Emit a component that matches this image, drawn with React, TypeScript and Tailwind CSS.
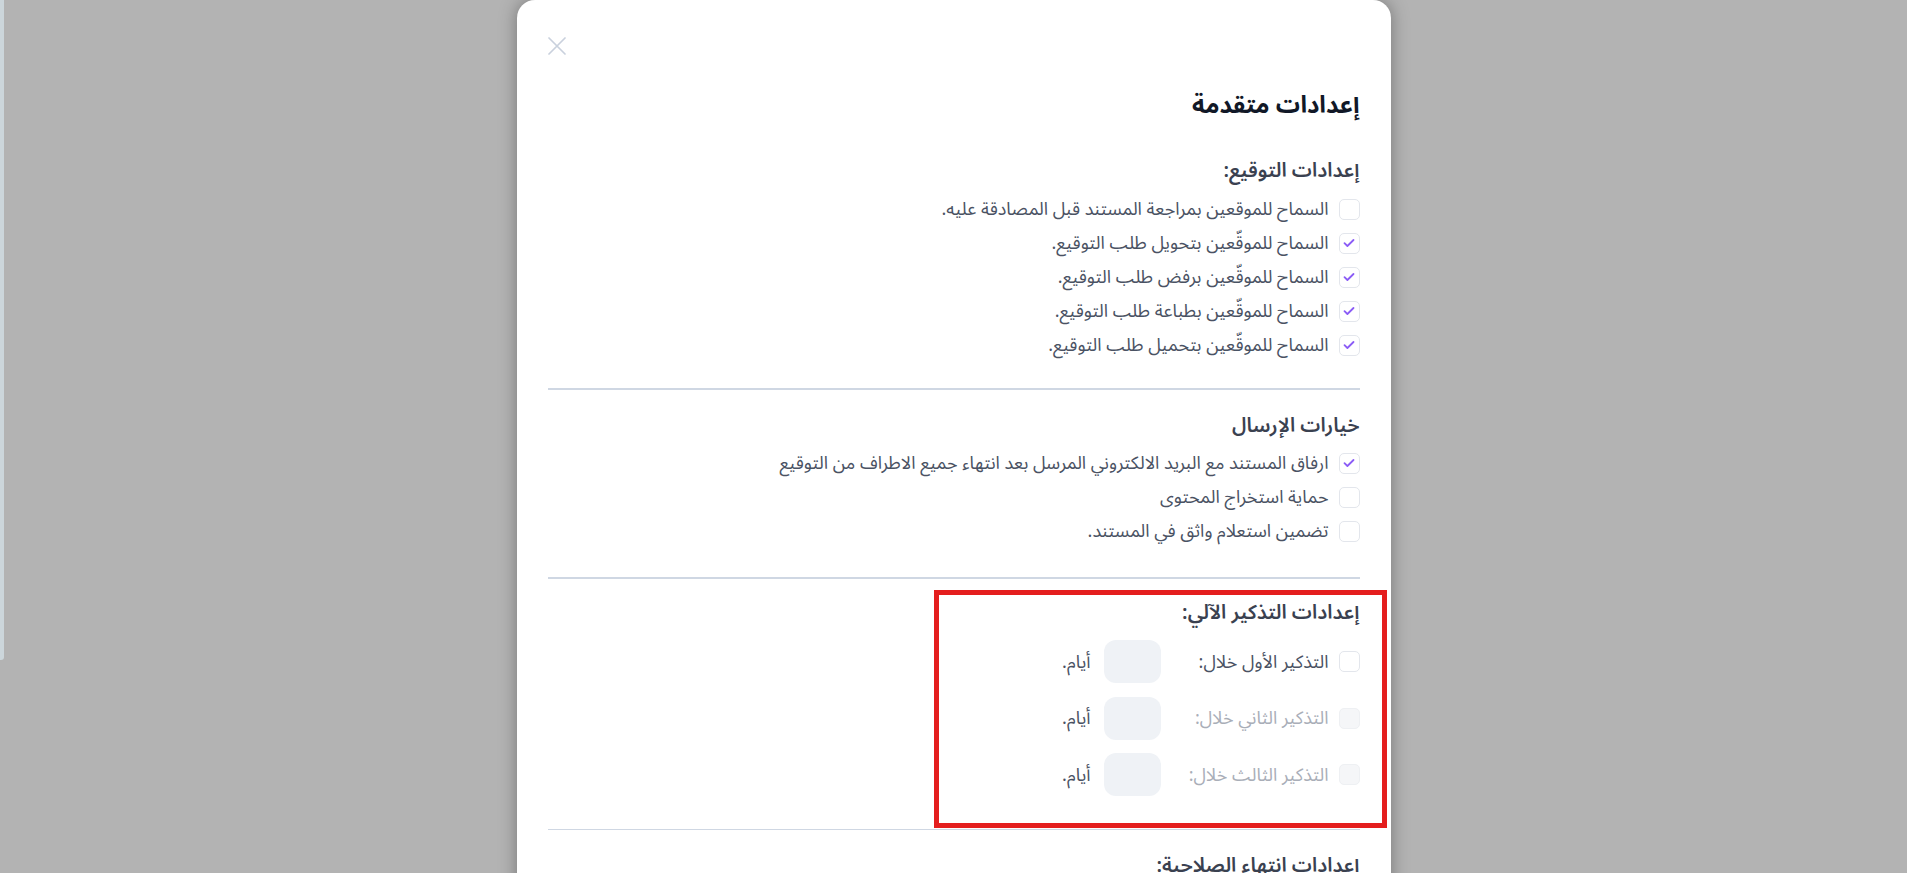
type Opt = { label: string; checked?: boolean };

const signing: Opt[] = [
  { label: "السماح للموقعين بمراجعة المستند قبل المصادقة عليه." },
  { label: "السماح للموقّعين بتحويل طلب التوقيع.", checked: true },
  { label: "السماح للموقّعين برفض طلب التوقيع.", checked: true },
  { label: "السماح للموقّعين بطباعة طلب التوقيع.", checked: true },
  { label: "السماح للموقّعين بتحميل طلب التوقيع.", checked: true },
];

const sending: Opt[] = [
  {
    label: "ارفاق المستند مع البريد الالكتروني المرسل بعد انتهاء جميع الاطراف من التوقيع",
    checked: true,
  },
  { label: "حماية استخراج المحتوى" },
  { label: "تضمين استعلام واثق في المستند." },
];

const reminders = [
  { label: "التذكير الأول خلال:", disabled: false },
  { label: "التذكير الثاني خلال:", disabled: true },
  { label: "التذكير الثالث خلال:", disabled: true },
];

function Checkbox({ checked, disabled }: { checked?: boolean; disabled?: boolean }) {
  return (
    <span
      className={
        disabled
          ? "flex h-[21px] w-[21px] shrink-0 items-center justify-center rounded-[5px] border border-[#eef0f3] bg-[#f5f6f8]"
          : "flex h-[21px] w-[21px] shrink-0 items-center justify-center rounded-[5px] border border-[#e3e6ec] bg-white"
      }
    >
      {checked && (
        <svg width="12" height="10" viewBox="0 0 12 10" fill="none">
          <path
            d="M1.5 5.2 4.4 8 10.5 2"
            stroke="#8b5cf6"
            strokeWidth="1.8"
            strokeLinecap="round"
            strokeLinejoin="round"
          />
        </svg>
      )}
    </span>
  );
}

function OptionRow({ label, checked }: Opt) {
  return (
    <label className="flex h-[34px] items-center gap-[10px]">
      <Checkbox checked={checked} />
      <span className="text-[18px] leading-[24px] text-[#4a5263]">{label}</span>
    </label>
  );
}

function Heading({ children }: { children: React.ReactNode }) {
  return (
    <h3 className="h-[28px] text-[20px] font-semibold leading-[28px] text-[#3a4150]">
      {children}
    </h3>
  );
}

export default function App() {
  return (
    <div
      className="relative h-[873px] w-full overflow-hidden bg-[#b3b3b3]"
      style={{ fontFamily: '"Noto Sans Arabic", "DejaVu Sans", "Noto Sans", sans-serif' }}
    >
      <div className="absolute left-0 top-0 h-[660px] w-[4px] rounded-br-[3px] bg-[#ccd6db]" />

      <div
        dir="rtl"
        className="relative mx-auto min-h-[1000px] w-[874px] rounded-t-[18px] bg-white px-[31px] pt-[37px] shadow-[0_0_18px_rgba(0,0,0,0.35)]"
      >
        <div className="flex justify-end">
          <svg width="18" height="18" viewBox="0 0 18 18" fill="none">
            <path
              d="M1 1 17 17M17 1 1 17"
              stroke="#c9d1dd"
              strokeWidth="1.7"
              strokeLinecap="round"
            />
          </svg>
        </div>

        <h2 className="mt-[35px] h-[32px] text-[24px] font-bold leading-[32px] text-[#111827]">
          إعدادات متقدمة
        </h2>

        <div className="mt-[35px]">
          <Heading>إعدادات التوقيع:</Heading>
          <div className="mt-[7px] flex flex-col">
            {signing.map((o) => (
              <OptionRow key={o.label} {...o} />
            ))}
          </div>
        </div>

        <div className="mt-[26px] h-[2px] bg-[#cfd7e3]" />

        <div className="mt-[22px]">
          <Heading>خيارات الإرسال</Heading>
          <div className="mt-[6px] flex flex-col">
            {sending.map((o) => (
              <OptionRow key={o.label} {...o} />
            ))}
          </div>
        </div>

        <div className="mt-[29px] h-[2px] bg-[#cfd7e3]" />

        <div className="relative mt-[20px]">
          <Heading>إعدادات التذكير الآلي:</Heading>
          <div className="mt-[13px] flex flex-col gap-[13.5px]">
            {reminders.map((r) => (
              <div key={r.label} className="flex h-[43px] items-center">
                <Checkbox disabled={r.disabled} />
                <span
                  className={
                    r.disabled
                      ? "mr-[10px] w-[168px] text-[18px] leading-[24px] text-[#a9aeb8]"
                      : "mr-[10px] w-[168px] text-[18px] leading-[24px] text-[#4a5263]"
                  }
                >
                  {r.label}
                </span>
                <input
                  type="text"
                  className="h-[43px] w-[57px] rounded-[12px] bg-[#eff2f6] outline-none"
                />
                <span className="mr-[13px] text-[18px] leading-[24px] text-[#4a5263]">أيام.</span>
              </div>
            ))}
          </div>
          <div className="pointer-events-none absolute right-[-27px] top-[-9px] h-[238px] w-[453px] border-[5px] border-[#e41e1e]" />
        </div>

        <div className="mt-[33px] h-px bg-[#cfd7e3]" />

        <div className="mt-[22px]">
          <Heading>إعدادات انتهاء الصلاحية:</Heading>
        </div>
      </div>
    </div>
  );
}
